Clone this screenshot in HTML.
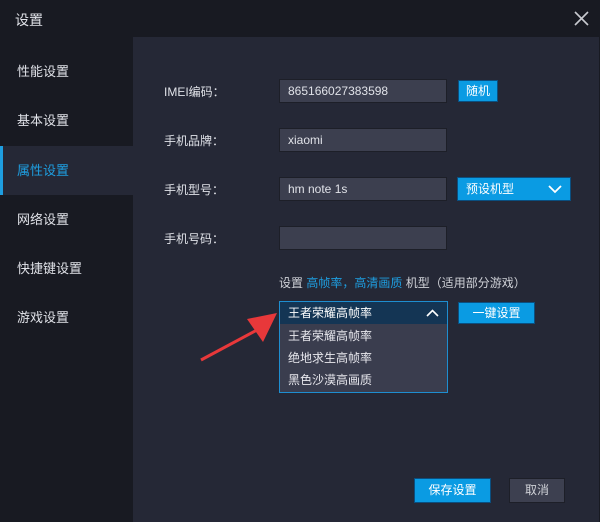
<!DOCTYPE html><html><head><meta charset="utf-8"><style>
*{margin:0;padding:0;box-sizing:border-box}
body{width:600px;height:522px;background:#181a22;position:relative;overflow:hidden;font-family:"Liberation Sans","Noto Sans CJK SC",sans-serif;font-size:12px;color:#d8dae0}
.a{position:absolute}
.side{left:0;top:37px;width:133px;height:485px;background:#181a22}
.main{left:133px;top:37px;width:466px;height:485px;background:#252836}
.item{position:absolute;left:0;width:133px;height:49px;line-height:49px;padding-left:17px;font-size:13px;color:#e0e2e8}
.item.act{background:#252836;color:#1e9ee0;border-left:3px solid #1e9ee0;padding-left:14px}
.lbl{position:absolute;left:164px;font-size:12px;color:#e0e2e8}
.in{position:absolute;left:279px;width:168px;height:24px;background:#3c3f4f;border:1px solid #1d1f28;line-height:22px;padding-left:8px;color:#e0e2e8}
.btn{position:absolute;background:#0a9be3;border:1px solid #0a4f80;color:#fff;text-align:center}
</style></head><body>
<div class="a" style="left:15px;top:10px;font-size:14px;color:#e0e2e8">设置</div>
<svg class="a" style="left:574px;top:11px" width="15" height="15"><path d="M1 1L14 14M14 1L1 14" stroke="#c8cad0" stroke-width="1.6"/></svg>
<div class="a side">
<div class="item" style="top:10px">性能设置</div>
<div class="item" style="top:59px">基本设置</div>
<div class="item act" style="top:109px">属性设置</div>
<div class="item" style="top:158px">网络设置</div>
<div class="item" style="top:207px">快捷键设置</div>
<div class="item" style="top:256px">游戏设置</div>
</div>
<div class="a main"></div>
<div class="lbl" style="top:83px">IMEI编码：</div>
<div class="in" style="top:79px">865166027383598</div>
<div class="btn" style="left:458px;top:80px;width:40px;height:22px;line-height:20px">随机</div>
<div class="lbl" style="top:132px">手机品牌：</div>
<div class="in" style="top:128px">xiaomi</div>
<div class="lbl" style="top:181px">手机型号：</div>
<div class="in" style="top:177px">hm note 1s</div>
<div class="btn" style="left:457px;top:177px;width:114px;height:24px;line-height:22px;text-align:left;padding-left:8px">预设机型
<svg style="position:absolute;right:8px;top:6px" width="14" height="10"><path d="M1 2L7 8L13 2" stroke="#fff" stroke-width="1.8" fill="none"/></svg></div>
<div class="lbl" style="top:230px">手机号码：</div>
<div class="in" style="top:226px"></div>
<div class="a" style="left:279px;top:274px;color:#d0d2d8">设置 <span style="color:#1e9ee0">高帧率，高清画质</span> 机型（适用部分游戏）</div>
<div class="a" style="left:279px;top:301px;width:169px;height:24px;background:#143554;border:1px solid #1e8ed0;line-height:22px;padding-left:8px;color:#fff">王者荣耀高帧率
<svg style="position:absolute;right:8px;top:7px" width="13" height="9"><path d="M1 7L6.5 1.5L12 7" stroke="#fff" stroke-width="1.6" fill="none"/></svg></div>
<div class="a" style="left:279px;top:324px;width:169px;height:69px;background:#3a3d4e;border:1px solid #1e8ed0;border-top:none;color:#e8e8ee;line-height:22px;padding-left:8px;padding-top:1px">王者荣耀高帧率<br>绝地求生高帧率<br>黑色沙漠高画质</div>
<div class="btn" style="left:458px;top:302px;width:77px;height:22px;line-height:20px">一键设置</div>
<svg class="a" style="left:195px;top:305px" width="90" height="60"><path d="M6 55L62 25" stroke="#e8383a" stroke-width="3"/><path d="M82 8L52 14L68 37Z" fill="#e8383a"/></svg>
<div class="btn" style="left:414px;top:478px;width:77px;height:25px;line-height:23px;font-size:12px">保存设置</div>
<div class="a" style="left:509px;top:478px;width:56px;height:25px;line-height:23px;background:#3d4050;border:1px solid #1d1f28;text-align:center;color:#d0d2d8">取消</div>
</body></html>
